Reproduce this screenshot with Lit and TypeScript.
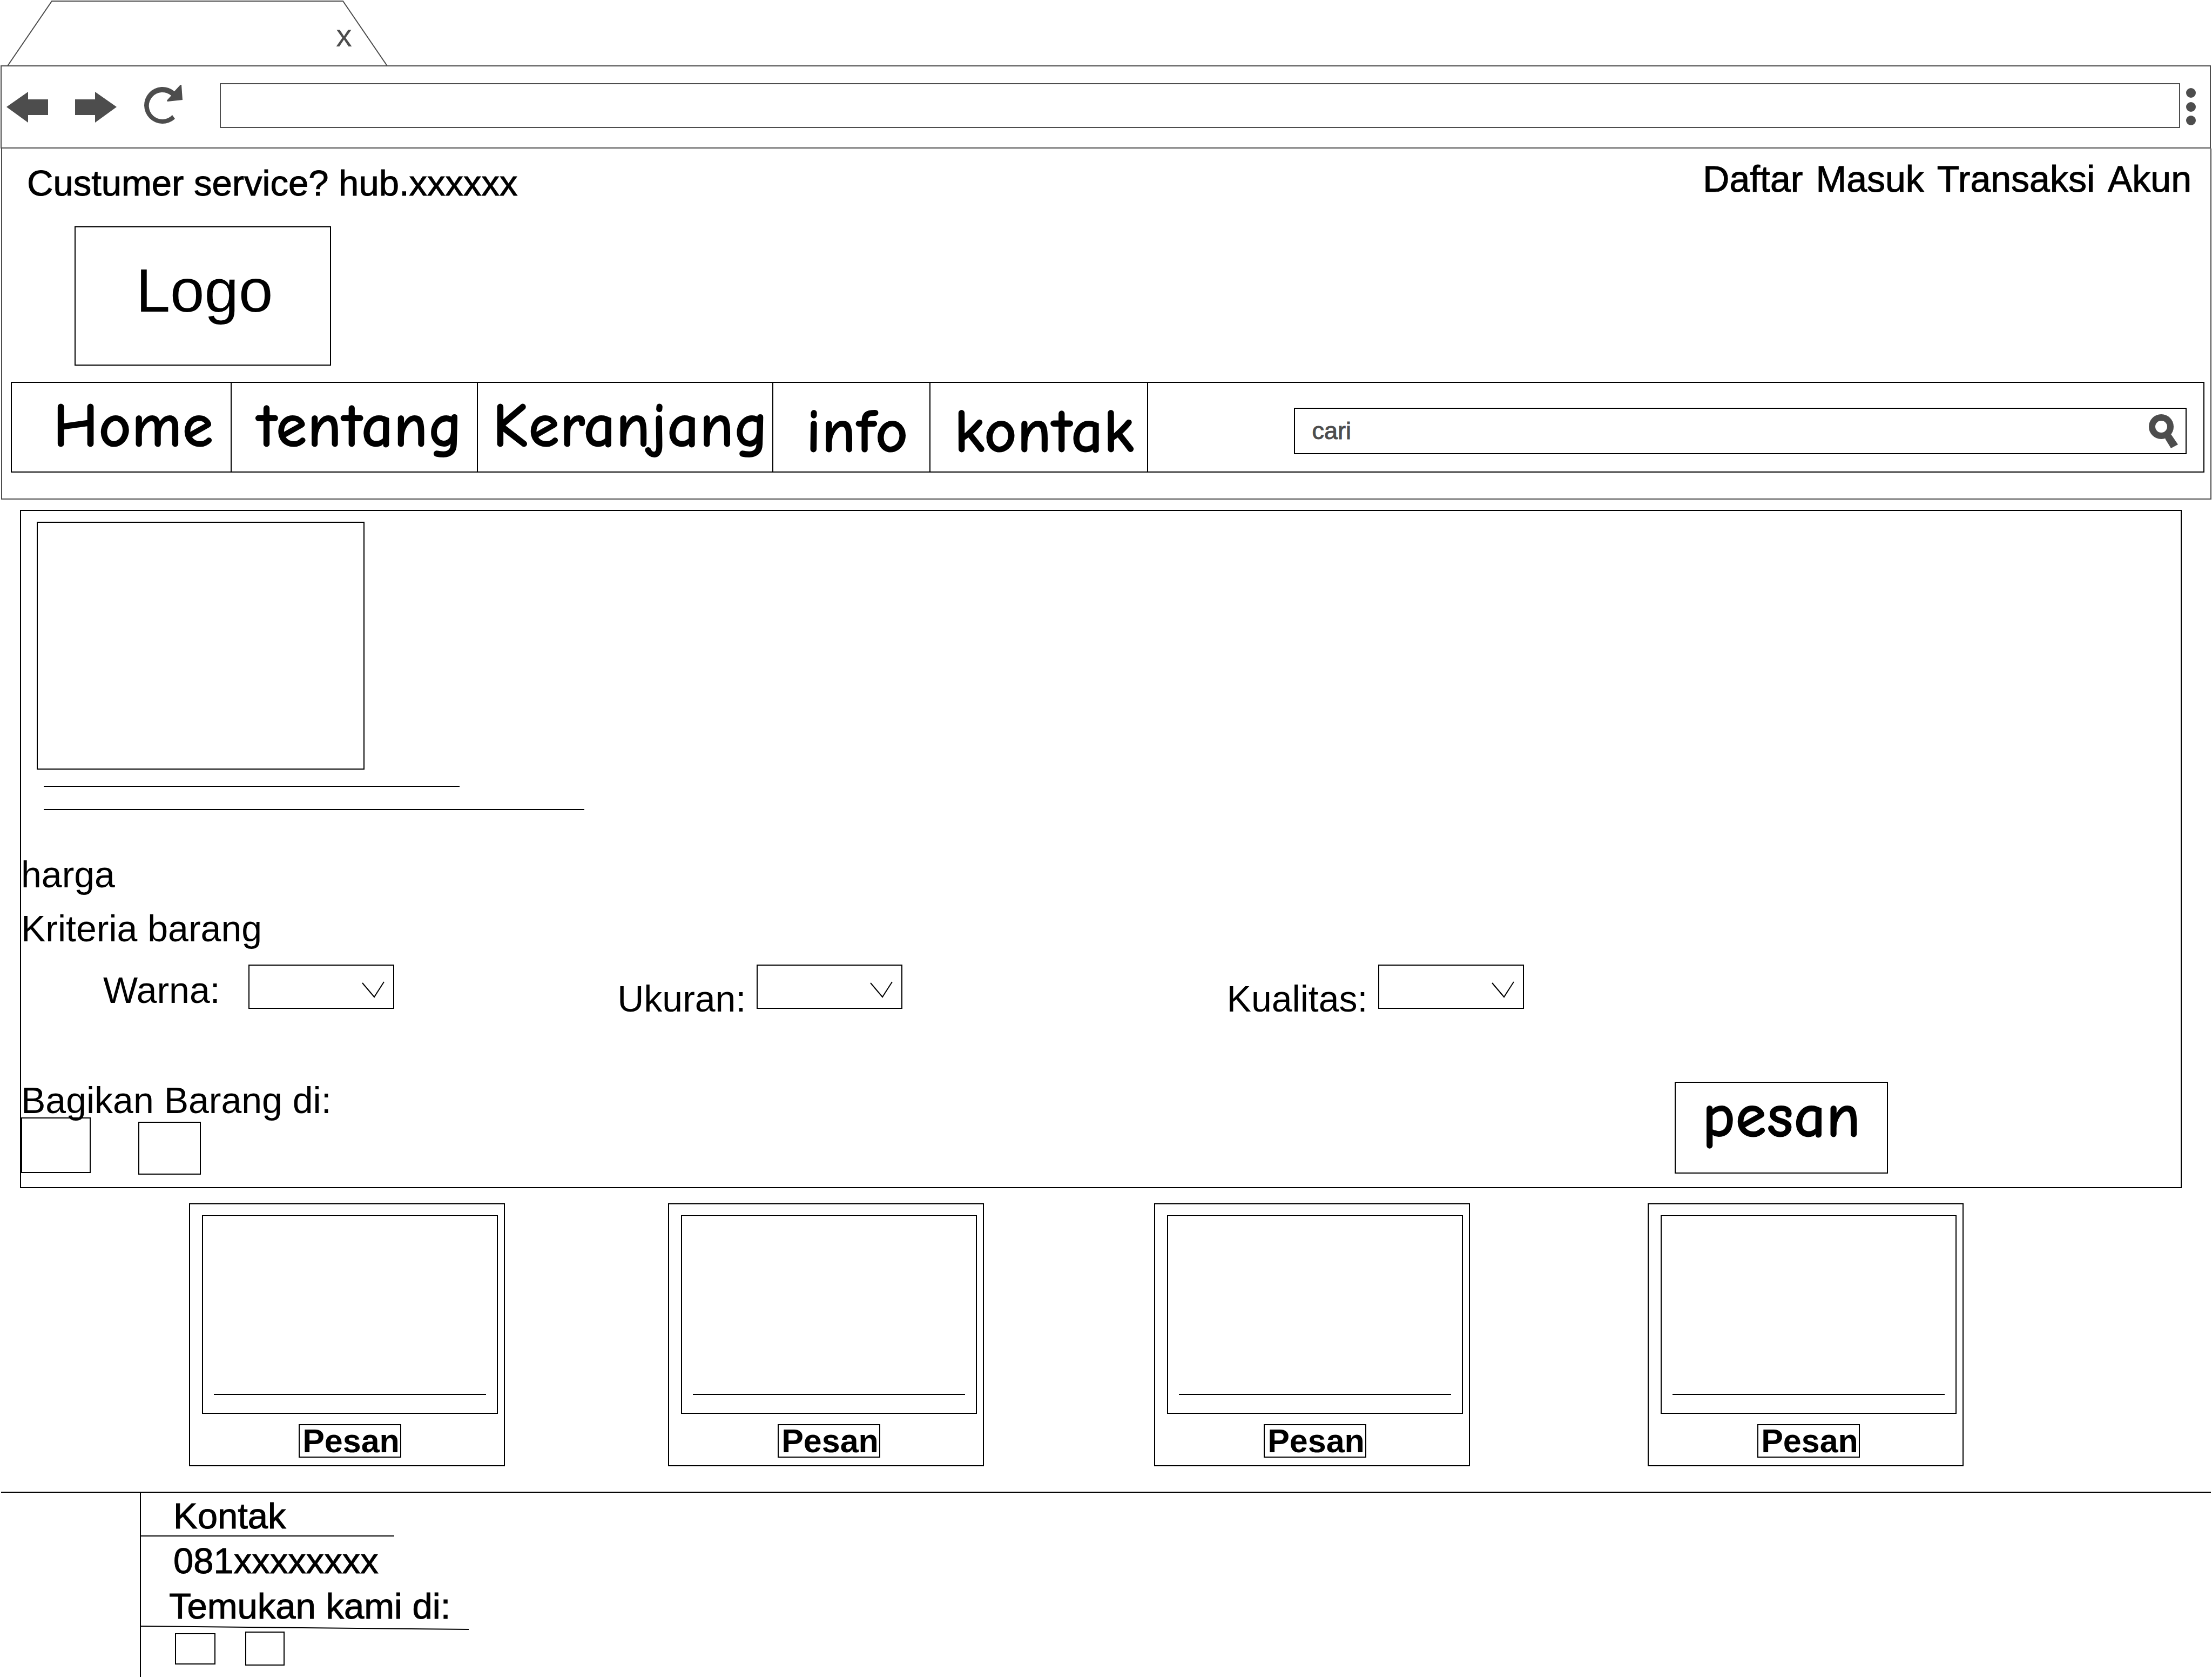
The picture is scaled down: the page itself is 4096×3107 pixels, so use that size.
import { LitElement, html, css, svg } from "lit";
import { customElement, property } from "lit/decorators.js";
import { classMap } from "lit/directives/class-map.js";

const base = css`
  * {
    box-sizing: border-box;
    margin: 0;
    padding: 0;
  }
  a {
    color: inherit;
    text-decoration: none;
  }
  button {
    font: inherit;
    color: inherit;
    background: none;
    border: 0;
    border-radius: 0;
    cursor: pointer;
  }
  svg {
    display: block;
  }
`;

const arrowLeft = svg`<path d="M0 28 L40 0 V14 H77 V43 H40 V57 Z" />`;
const arrowRight = svg`<path d="M77 28 L37 0 V14 H0 V43 H37 V57 Z" />`;
const reload = svg`<path
  d="M58 63 A34 34 0 1 1 57 12 L68 0 L70 0 L72 28 L44 31 L43 29 L51 20 A25 25 0 1 0 53 56 Z" />`;

@customElement("browser-chrome")
export class BrowserChrome extends LitElement {
  static styles = [
    base,
    css`
      :host {
        display: block;
        color: #4d4d4d;
      }
      .tab {
        position: relative;
        display: flex;
        justify-content: flex-end;
        width: 706px;
        height: 121px;
        margin-left: 13px;
        padding: 34px 52px 0 0;
      }
      .outline {
        position: absolute;
        inset: 0;
        fill: none;
        stroke: #4d4d4d;
        stroke-width: 2;
      }
      .close {
        position: relative;
        width: 60px;
        height: 64px;
        font-size: 60px;
        line-height: 64px;
      }
      .bar {
        display: flex;
        align-items: center;
        height: 154px;
        margin: 0 2px 0 1px;
        padding: 0 26px 0 9px;
        border: 2px solid #4d4d4d;
      }
      .tools {
        display: flex;
        align-items: center;
        gap: 50px;
      }
      .tools svg,
      .more svg {
        fill: #4d4d4d;
      }
      .address {
        flex: 1;
        min-width: 0;
        height: 83px;
        margin: 0 11px 5px 68px;
        padding: 0 20px;
        border: 2px solid #4d4d4d;
        border-radius: 0;
        background: #fff;
        font: 45px/60px "Liberation Sans", Arial, sans-serif;
        outline: 0;
      }
    `,
  ];

  render() {
    return html`
      <div class="tab">
        <svg class="outline" width="706" height="122" viewBox="0 0 706 122" aria-hidden="true">
          <path d="M1 122 L83 2 H622 L704 122" />
        </svg>
        <button class="close" aria-label="Tutup tab">x</button>
      </div>
      <div class="bar">
        <div class="tools">
          <button aria-label="Kembali">
            <svg width="77" height="57" viewBox="0 0 77 57">${arrowLeft}</svg>
          </button>
          <button aria-label="Maju">
            <svg width="77" height="57" viewBox="0 0 77 57">${arrowRight}</svg>
          </button>
          <button aria-label="Muat ulang">
            <svg width="73" height="82" viewBox="0 0 73 82">${reload}</svg>
          </button>
        </div>
        <input class="address" type="text" aria-label="Alamat" />
        <button class="more" aria-label="Menu">
          <svg width="18" height="70" viewBox="0 0 18 70">
            <circle cx="9" cy="9" r="9" />
            <circle cx="9" cy="35" r="9" />
            <circle cx="9" cy="60" r="9" />
          </svg>
        </button>
      </div>
    `;
  }
}

@customElement("site-header")
export class SiteHeader extends LitElement {
  static styles = [
    base,
    css`
      :host {
        display: block;
        margin: 0 1px 0 2px;
        padding: 16px 0 48px;
        border: 2px solid #4d4d4d;
        border-top: 0;
      }
      .top {
        display: flex;
        justify-content: space-between;
        align-items: flex-start;
        padding: 0 35px 0 46px;
        line-height: 80px;
        -webkit-text-stroke: 1px currentColor;
      }
      .service {
        padding-top: 8px;
      }
      .account {
        display: flex;
        gap: 24px;
        font-size: 68px;
      }
      .logo {
        display: flex;
        align-items: center;
        justify-content: center;
        width: 475px;
        height: 258px;
        margin: 40px 0 0 134px;
        padding: 0 0 20px 6px;
        border: 2px solid #000;
        font-size: 114px;
        line-height: 130px;
      }
      .menu {
        display: grid;
        grid-template-columns: 407fr 456fr 547fr 291fr 402fr 1954fr;
        height: 168px;
        margin: 30px 11px 0 16px;
        border: 2px solid #000;
      }
      .item {
        display: block;
        min-width: 0;
        padding: 14px 0 0 20px;
        border-right: 2px solid #000;
        font: 700 118px/132px "Comic Neue", "Comic Sans MS", cursive;
        text-align: center;
        white-space: nowrap;
      }
      .item:first-child {
        padding-left: 44px;
      }
      .low {
        padding-top: 24px;
      }
      .search {
        display: flex;
        align-items: center;
        height: 86px;
        margin: 46px 31px 0 270px;
        padding: 0 12px 0 32px;
        border: 2px solid #000;
      }
      .query {
        flex: 1;
        min-width: 0;
        height: 60px;
        border: 0;
        outline: 0;
        background: none;
        color: #4d4d4d;
        font: 45px/60px "Liberation Sans", Arial, sans-serif;
      }
      .query::placeholder {
        color: #4d4d4d;
        opacity: 1;
        -webkit-text-stroke: 1px #4d4d4d;
      }
    `,
  ];

  private menu = [
    { label: "Home", low: false },
    { label: "tentang", low: false },
    { label: "Keranjang", low: false },
    { label: "info", low: true },
    { label: "kontak", low: true },
  ];

  render() {
    return html`
      <div class="top">
        <p class="service">Custumer service? hub.xxxxxx</p>
        <nav class="account" aria-label="Akun">
          ${["Daftar", "Masuk", "Transaksi", "Akun"].map((t) => html`<a href="#">${t}</a>`)}
        </nav>
      </div>
      <a class="logo" href="#">Logo</a>
      <nav class="menu" aria-label="Menu utama">
        ${this.menu.map(
          (m) => html`<a href="#" class=${classMap({ item: true, low: m.low })}>${m.label}</a>`
        )}
        <form class="search" role="search">
          <input class="query" type="text" placeholder="cari" aria-label="cari" />
          <button type="button" aria-label="Cari">
            <svg width="56" height="64" viewBox="0 0 56 64">
              <circle cx="23" cy="24" r="17" fill="none" stroke="#4d4d4d" stroke-width="12" />
              <path d="M30 46 L41 38 L54 57 L41 64 Z" fill="#4d4d4d" />
            </svg>
          </button>
        </form>
      </nav>
    `;
  }
}

@customElement("product-panel")
export class ProductPanel extends LitElement {
  static styles = [
    base,
    css`
      :host {
        display: block;
        margin: 19px 56px 0 37px;
        padding-bottom: 23px;
        border: 2px solid #000;
        font-size: 68px;
        line-height: 80px;
      }
      .photo {
        width: 607px;
        height: 459px;
        margin: 20px 0 0 29px;
        border: 2px solid #000;
      }
      .rule {
        height: 2px;
        margin: 30px 0 0 42px;
        background: #000;
      }
      .short {
        width: 770px;
      }
      .long {
        width: 1001px;
        margin-top: 41px;
      }
      .price {
        margin-top: 79px;
      }
      .criteria {
        margin-top: 20px;
      }
      .fields {
        display: grid;
        grid-template-columns: 952fr 1128fr 1766fr;
        align-items: start;
        margin-top: 27px;
        padding-left: 152px;
      }
      .field {
        display: flex;
        align-items: flex-start;
        gap: 20px;
      }
      .field label {
        padding-top: 23px;
      }
      .first {
        gap: 52px;
      }
      .first label {
        padding-top: 7px;
      }
      .pick {
        position: relative;
      }
      .pick select {
        display: block;
        appearance: none;
        width: 270px;
        height: 82px;
        border: 2px solid #000;
        border-radius: 0;
        background: #fff;
        font: 45px/60px "Liberation Sans", Arial, sans-serif;
        outline: 0;
      }
      .pick svg {
        position: absolute;
        top: 31px;
        right: 18px;
        fill: none;
        stroke: #000;
        stroke-width: 2;
        pointer-events: none;
      }
      .actions {
        display: flex;
        justify-content: space-between;
        align-items: flex-start;
        margin-top: 114px;
        padding-right: 542px;
      }
      .share {
        padding-top: 2px;
        line-height: 64px;
      }
      .targets {
        display: flex;
        gap: 88px;
      }
      .targets button {
        width: 116px;
        height: 98px;
        margin-top: 8px;
        border: 2px solid #000;
      }
      .targets .big {
        width: 129px;
        height: 103px;
        margin-top: 0;
      }
      .order {
        width: 395px;
        height: 170px;
        padding-bottom: 42px;
        border: 2px solid #000;
        font: 700 118px/124px "Comic Neue", "Comic Sans MS", cursive;
      }
    `,
  ];

  private fields = [
    { id: "warna", label: "Warna:" },
    { id: "ukuran", label: "Ukuran:" },
    { id: "kualitas", label: "Kualitas:" },
  ];

  render() {
    return html`
      <div class="photo"></div>
      <div class="rule short"></div>
      <div class="rule long"></div>
      <p class="price">harga</p>
      <p class="criteria">Kriteria barang</p>
      <div class="fields">
        ${this.fields.map(
          (f, i) => html`
            <div class=${classMap({ field: true, first: i === 0 })}>
              <label for=${f.id}>${f.label}</label>
              <div class="pick">
                <select id=${f.id}></select>
                <svg width="42" height="32" viewBox="0 0 42 32" aria-hidden="true">
                  <path d="M1 3 L23 29 L41 1" />
                </svg>
              </div>
            </div>
          `
        )}
      </div>
      <div class="actions">
        <div class="share">
          <p>Bagikan Barang di:</p>
          <div class="targets">
            <button class="big" aria-label="Bagikan 1"></button>
            <button aria-label="Bagikan 2"></button>
          </div>
        </div>
        <button class="order">pesan</button>
      </div>
    `;
  }
}

@customElement("product-card")
export class ProductCard extends LitElement {
  @property() action = "Pesan";

  static styles = [
    base,
    css`
      :host {
        box-sizing: border-box;
        display: flex;
        flex-direction: column;
        width: 585px;
        padding: 20px 11px 14px 22px;
        border: 2px solid #000;
      }
      .picture {
        display: flex;
        align-items: flex-end;
        height: 368px;
        padding: 0 20px 33px;
        border: 2px solid #000;
      }
      .caption {
        flex: 1;
        height: 2px;
        background: #000;
      }
      .buy {
        align-self: center;
        width: 190px;
        height: 62px;
        margin-top: 19px;
        padding-left: 4px;
        border: 2px solid #000;
        font-size: 61px;
        font-weight: 700;
        line-height: 58px;
      }
    `,
  ];

  render() {
    return html`
      <div class="picture"><div class="caption"></div></div>
      <button class="buy">${this.action}</button>
    `;
  }
}

@customElement("site-footer")
export class SiteFooter extends LitElement {
  static styles = [
    base,
    css`
      :host {
        display: block;
        margin: 47px 2px 0;
        border-top: 2px solid #000;
        line-height: 72px;
        -webkit-text-stroke: 1px currentColor;
      }
      .column {
        margin-left: 257px;
        padding: 7px 0 21px;
        border-left: 2px solid #000;
      }
      .title {
        width: 469px;
        padding-left: 60px;
        border-bottom: 2px solid #000;
        font-size: inherit;
        font-weight: 400;
      }
      .phone {
        margin-top: 9px;
        padding-left: 60px;
      }
      .find {
        margin-top: 12px;
        padding-left: 52px;
      }
      .slope {
        stroke: #000;
        stroke-width: 2;
      }
      .links {
        display: flex;
        gap: 55px;
        margin-top: 2px;
        padding-left: 63px;
      }
      .links a {
        width: 73px;
        height: 63px;
        border: 2px solid #000;
      }
      .links .flat {
        width: 75px;
        height: 58px;
        margin-top: 3px;
      }
    `,
  ];

  render() {
    return html`
      <div class="column">
        <h2 class="title">Kontak</h2>
        <p class="phone">081xxxxxxxx</p>
        <p class="find">Temukan kami di:</p>
        <svg class="slope" width="607" height="9" viewBox="0 0 607 9" aria-hidden="true">
          <path d="M0 1 L607 7" />
        </svg>
        <div class="links">
          <a class="flat" href="#" aria-label="Media sosial 1"></a>
          <a href="#" aria-label="Media sosial 2"></a>
        </div>
      </div>
    `;
  }
}

@customElement("app-root")
export class AppRoot extends LitElement {
  static styles = css`
    :host {
      display: block;
      background: #fff;
      color: #000;
      font: 67px/80px "Liberation Sans", Arial, sans-serif;
    }
    .cards {
      display: grid;
      grid-template-columns: 887fr 900fr 914fr 585fr;
      margin-top: 28px;
      padding: 0 460px 0 350px;
    }
  `;

  render() {
    return html`
      <browser-chrome></browser-chrome>
      <site-header></site-header>
      <main>
        <product-panel></product-panel>
        <section class="cards">
          ${[1, 2, 3, 4].map(() => html`<product-card></product-card>`)}
        </section>
      </main>
      <site-footer></site-footer>
    `;
  }
}
